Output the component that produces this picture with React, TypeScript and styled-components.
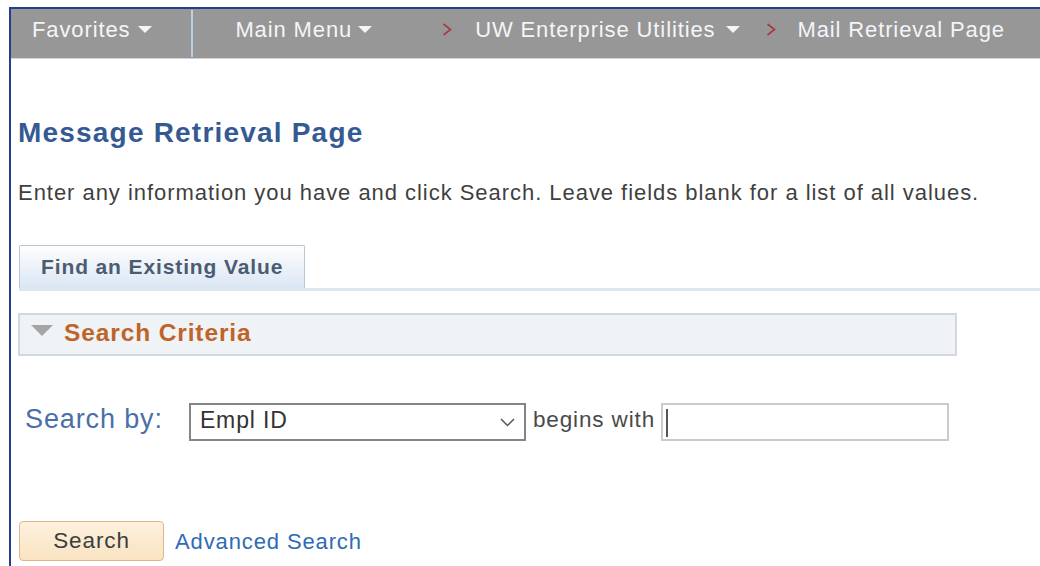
import React from "react";
import styled, { createGlobalStyle } from "styled-components";

const GlobalStyle = createGlobalStyle`
  html, body {
    margin: 0;
    padding: 0;
    background: #fff;
  }
  body, button, input {
    font-family: "Liberation Sans", Arial, Helvetica, sans-serif;
    letter-spacing: 0.88px;
  }
`;

const Frame = styled.div`
  box-sizing: border-box;
  margin: 7px 0 0 9px;
  min-height: calc(100vh - 7px);
  border-top: 2px solid #243f8e;
  border-left: 2px solid #243f8e;
  overflow: hidden;
`;

/* ---- breadcrumb bar ---- */

const NavBar = styled.nav`
  box-sizing: border-box;
  display: flex;
  align-items: center;
  height: 50px;
  padding: 0 0 8px 21px;
  background: #979797;
  border-bottom: 1px solid #d4d4d4;
  white-space: nowrap;
`;

const NavLink = styled.span<{ $ml?: number }>`
  margin-left: ${({ $ml }) => $ml ?? 0}px;
  font-size: 22px;
  line-height: 25px;
  color: #f4f5f7;
`;

const NavDivider = styled.span<{ $ml: number }>`
  align-self: stretch;
  width: 2px;
  margin: 1px 0 -7px ${({ $ml }) => $ml}px;
  background: #b7cfe8;
`;

const CaretWrap = styled.span<{ $ml: number }>`
  display: flex;
  margin-left: ${({ $ml }) => $ml}px;
`;

const CrumbWrap = styled.span<{ $ml: number }>`
  display: flex;
  margin-left: ${({ $ml }) => $ml}px;
`;

const Caret = ({ ml }: { ml: number }) => (
  <CaretWrap $ml={ml}>
    <svg width="14" height="7" viewBox="0 0 14 7">
      <polygon points="0,0 14,0 7,7" fill="#f4f5f7" />
    </svg>
  </CaretWrap>
);

const Crumb = ({ ml }: { ml: number }) => (
  <CrumbWrap $ml={ml}>
    <svg width="10" height="13" viewBox="0 0 10 13">
      <polyline points="1.5,1 8.5,6.5 1.5,12" fill="none" stroke="#a83a44" strokeWidth="1.7" />
    </svg>
  </CrumbWrap>
);

/* ---- page body ---- */

const Content = styled.main`
  padding: 0 0 0 7px;
`;

const Title = styled.h1`
  margin: 58px 0 0;
  font-size: 28px;
  line-height: 32px;
  font-weight: bold;
  letter-spacing: 1.2px;
  color: #355a93;
`;

const Instructions = styled.p`
  margin: 31px 0 0;
  font-size: 22px;
  line-height: 26px;
  letter-spacing: 0.96px;
  color: #3f3f3f;
`;

const TabStrip = styled.div`
  display: flex;
  margin: 39px 0 0 1px;
  border-bottom: 3px solid #dce6f2;
`;

const Tab = styled.div`
  box-sizing: border-box;
  height: 43px;
  padding: 9px 21px 0;
  border: 1px solid #b9c5d2;
  border-bottom: none;
  border-radius: 2px 2px 0 0;
  background: linear-gradient(#fdfeff, #dbe6f3);
  font-size: 21px;
  line-height: 24px;
  font-weight: bold;
  color: #4b5c71;
`;

const CriteriaBar = styled.div`
  box-sizing: border-box;
  display: flex;
  align-items: flex-start;
  width: 939px;
  height: 43px;
  margin-top: 22px;
  padding: 4px 11px 0;
  border: 2px solid #d3d8de;
  background: #f0f3f5;
`;

const Disclosure = styled.svg`
  flex: none;
  margin-top: 6px;
`;

const CriteriaTitle = styled.span`
  margin-left: 11px;
  font-size: 24.5px;
  line-height: 28px;
  font-weight: bold;
  color: #bf6429;
`;

const SearchRow = styled.div`
  display: flex;
  align-items: flex-start;
  margin: 47px 0 0 7px;
`;

const FieldLabel = styled.label`
  margin-right: 26px;
  font-size: 27px;
  line-height: 32px;
  color: #4a6fa8;
`;

const SelectBox = styled.div`
  box-sizing: border-box;
  display: flex;
  align-items: flex-start;
  justify-content: space-between;
  width: 337px;
  height: 38px;
  padding: 0 9px 0 9px;
  border: 2px solid #858585;
  background: #fff;
  font-size: 23px;
  line-height: 30px;
  color: #333;
`;

const SelectArrow = styled.svg`
  margin-top: 13px;
`;

const Operator = styled.span`
  margin: 0 6px 0 7px;
  font-size: 22.5px;
  line-height: 34px;
  color: #4a4a4a;
`;

const TextBox = styled.div`
  box-sizing: border-box;
  width: 288px;
  height: 38px;
  padding: 4px 0 0 3px;
  border: 2px solid #cbcbcb;
  background: #fff;
`;

const TextCursor = styled.span`
  display: block;
  width: 2px;
  height: 28px;
  background: #555;
`;

const ActionRow = styled.div`
  display: flex;
  align-items: center;
  margin: 80px 0 0 1px;
`;

const SearchButton = styled.button`
  box-sizing: border-box;
  width: 145px;
  height: 40px;
  padding: 0;
  border: 1px solid #e0b689;
  border-radius: 4px;
  background: linear-gradient(#fdf1de, #f9e3c2);
  font-size: 22.5px;
  line-height: 38px;
  color: #3d3d3d;
`;

const AdvancedLink = styled.a`
  margin-left: 11px;
  font-size: 22px;
  line-height: 25px;
  color: #2e6bb4;
  text-decoration: none;
`;

export default function App() {
  return (
    <>
      <GlobalStyle />
      <Frame>
        <NavBar>
          <NavLink>Favorites</NavLink>
          <Caret ml={8} />
          <NavDivider $ml={39} />
          <NavLink $ml={42}>Main Menu</NavLink>
          <Caret ml={6} />
          <Crumb ml={70} />
          <NavLink $ml={23}>UW Enterprise Utilities</NavLink>
          <Caret ml={11} />
          <Crumb ml={26} />
          <NavLink $ml={21}>Mail Retrieval Page</NavLink>
        </NavBar>
        <Content>
          <Title>Message Retrieval Page</Title>
          <Instructions>
            Enter any information you have and click Search. Leave fields blank for a list of all values.
          </Instructions>
          <TabStrip>
            <Tab>Find an Existing Value</Tab>
          </TabStrip>
          <CriteriaBar>
            <Disclosure width="22" height="11" viewBox="0 0 22 11">
              <polygon points="0,0 22,0 11,11" fill="#a5a5a5" />
            </Disclosure>
            <CriteriaTitle>Search Criteria</CriteriaTitle>
          </CriteriaBar>
          <SearchRow>
            <FieldLabel>Search by:</FieldLabel>
            <SelectBox>
              <span>Empl ID</span>
              <SelectArrow width="15" height="9" viewBox="0 0 15 9">
                <polyline points="1,1 7.5,7.5 14,1" fill="none" stroke="#555" strokeWidth="1.5" />
              </SelectArrow>
            </SelectBox>
            <Operator>begins with</Operator>
            <TextBox>
              <TextCursor />
            </TextBox>
          </SearchRow>
          <ActionRow>
            <SearchButton type="button">Search</SearchButton>
            <AdvancedLink href="#">Advanced Search</AdvancedLink>
          </ActionRow>
        </Content>
      </Frame>
    </>
  );
}
